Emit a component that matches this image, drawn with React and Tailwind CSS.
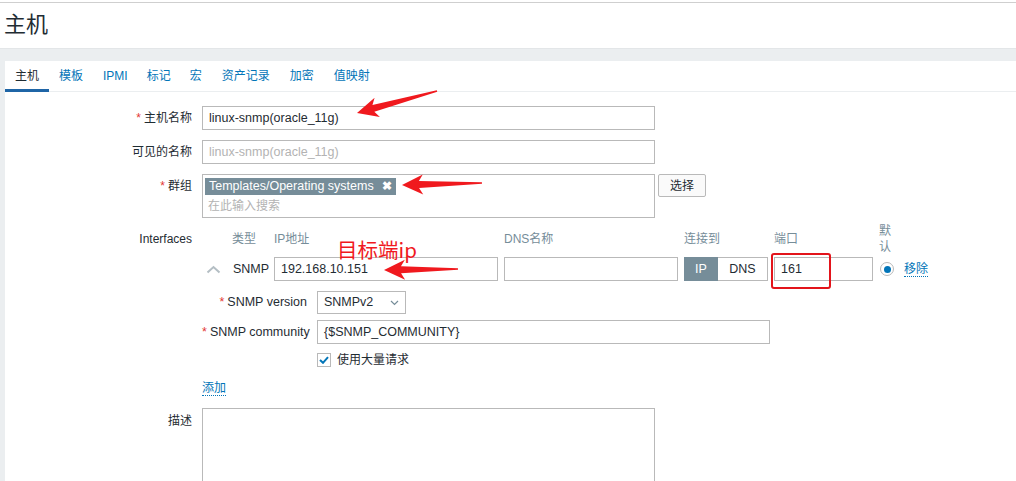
import React from 'react';

const FONT = { fontFamily: '"Liberation Sans", Arial, "Noto Sans CJK SC", sans-serif' };

const TABS = ['主机', '模板', 'IPMI', '标记', '宏', '资产记录', '加密', '值映射'];

// Red annotation arrow: tip at the origin pointing left, tail `len` px to the right
function Arrow({ x, y, len, angle }) {
  const pts = `0,0 21,-10 17,-3.5 ${len},-0.8 ${len},0.8 17,3.5 21,10`;
  return <polygon points={pts} fill="#f0191e" transform={`translate(${x} ${y}) rotate(${angle})`} />;
}

function Label({ children, required }) {
  return (
    <div className="w-[197px] shrink-0 pr-[10px] text-right leading-[24px]">
      {required && <span className="text-[#e33734] mr-[3px]">*</span>}
      {children}
    </div>
  );
}

function TextBox({ value, placeholder, className = '' }) {
  return (
    <div className={`h-[24px] border border-[#b9b9b9] bg-white px-[6px] flex items-center text-[12.5px] ${className}`}>
      {value ? <span>{value}</span> : <span className="text-[#b3b3b3]">{placeholder}</span>}
    </div>
  );
}

export default function App() {
  return (
    <div className="w-[1016px] h-[481px] overflow-hidden bg-white relative text-[12px] text-[#1f2c33]" style={FONT}>
      {/* page header */}
      <div className="mt-[2px] border-t border-[#cfcfcf] h-[46px] flex items-center pl-[4px]">
        <h1 className="text-[22px] leading-none font-normal text-[#1f2c33] -mt-[2px]">主机</h1>
      </div>

      <div className="bg-[#ebeef0] pt-[12px] pl-[5px] border-t border-[#e3e6e8]">
        <div className="bg-white h-[421px]">
          {/* tabs */}
          <div className="flex h-[31px] border-b border-[#ebeef0]">
            {TABS.map((t, i) => (
              <div
                key={t}
                className={`px-[10px] h-[31px] flex items-center ${
                  i === 0 ? 'text-[#1f2c33] border-b-[3px] border-[#1f65a6] pt-[1px]' : 'text-[#0275b8] pb-[2px]'
                } ${i === 3 || i === 4 ? '-ml-[1px]' : ''}`}
              >
                {t}
              </div>
            ))}
          </div>

          <div className="pt-[14px]">
            {/* host name */}
            <div className="flex">
              <Label required>主机名称</Label>
              <TextBox value="linux-snmp(oracle_11g)" className="w-[453px]" />
            </div>

            {/* visible name */}
            <div className="flex mt-[10px]">
              <Label>可见的名称</Label>
              <TextBox placeholder="linux-snmp(oracle_11g)" className="w-[453px]" />
            </div>

            {/* groups */}
            <div className="flex mt-[10px]">
              <Label required>群组</Label>
              <div className="w-[453px] h-[44px] border border-[#b9b9b9] p-[2px]">
                <span className="inline-flex items-center h-[17px] bg-[#768d99] text-white px-[4px] leading-none text-[12.5px]">
                  Templates/Operating systems
                  <span className="ml-[8px] text-[12px] font-bold">✖</span>
                </span>
                <div className="text-[#b3b3b3] pl-[3px] mt-[2px]">在此输入搜索</div>
              </div>
              <button className="ml-[3px] w-[48px] h-[23px] border border-[#b9b9b9] rounded-[2px] bg-[#fafafa] text-[#1f2c33]">
                选择
              </button>
            </div>

            {/* interfaces */}
            <div className="flex mt-[5px]">
              <div className="w-[197px] shrink-0 pr-[10px] h-[32px] flex items-center justify-end">Interfaces</div>
              <div>
                <div className="flex items-center h-[32px] text-[#768d99]">
                  <div className="w-[30px]" />
                  <div className="w-[42px]">类型</div>
                  <div className="w-[230px]">IP地址</div>
                  <div className="w-[180px]">DNS名称</div>
                  <div className="w-[90px]">连接到</div>
                  <div className="w-[105px]">端口</div>
                  <div className="leading-[16px]">默<br />认</div>
                </div>

                <div className="flex items-center h-[24px] mt-[2px]">
                  <div className="w-[30px] flex items-center pl-[4px]">
                    <svg width="15" height="9" viewBox="0 0 15 9">
                      <polyline points="1.5,7.5 7.5,2 13.5,7.5" fill="none" stroke="#b4bec4" strokeWidth="2" />
                    </svg>
                  </div>
                  <div className="w-[42px] pl-[1px] text-[12.5px]">SNMP</div>
                  <TextBox value="192.168.10.151" className="w-[224px]" />
                  <TextBox className="w-[174px] ml-[6px]" />
                  <div className="ml-[6px] flex h-[24px] w-[84px] text-[12.5px]">
                    <div className="w-[34px] bg-[#768d99] text-white flex items-center justify-center">IP</div>
                    <div className="flex-1 border border-l-0 border-[#b9b9b9] flex items-center justify-center">DNS</div>
                  </div>
                  <TextBox value="161" className="w-[99px] ml-[6px]" />
                  <div className="ml-[6px] w-[25px] flex items-center pl-[1px]">
                    <div className="w-[14px] h-[14px] rounded-full border border-[#b9b9b9] flex items-center justify-center">
                      <div className="w-[7px] h-[7px] rounded-full bg-[#0275b8]" />
                    </div>
                  </div>
                  <span className="text-[#0275b8] border-b border-dotted border-[#0275b8] leading-[14px]">移除</span>
                </div>

                {/* snmp details */}
                <div className="flex mt-[10px]">
                  <div className="w-[115px] pr-[10px] text-right leading-[23px] text-[12.5px]">
                    <span className="text-[#e33734] mr-[3px]">*</span>SNMP version
                  </div>
                  <div className="w-[89px] h-[23px] border border-[#b9b9b9] flex items-center justify-between px-[6px] text-[12.5px]">
                    <span>SNMPv2</span>
                    <svg width="9" height="6" viewBox="0 0 9 6">
                      <polyline points="1,1 4.5,4.5 8,1" fill="none" stroke="#768d99" strokeWidth="1.2" />
                    </svg>
                  </div>
                </div>

                <div className="flex mt-[6px]">
                  <div className="w-[115px] pr-[10px] text-right leading-[24px] whitespace-nowrap text-[12.5px]">
                    <span className="text-[#e33734] mr-[3px]">*</span>SNMP community
                  </div>
                  <TextBox value="{$SNMP_COMMUNITY}" className="w-[453px]" />
                </div>

                <div className="flex items-center mt-[7px] ml-[115px]">
                  <div className="w-[14px] h-[14px] border border-[#b9b9b9] flex items-center justify-center">
                    <svg width="10" height="8" viewBox="0 0 10 8">
                      <polyline points="1,4 4,6.8 9,1.2" fill="none" stroke="#0275b8" strokeWidth="2" />
                    </svg>
                  </div>
                  <span className="ml-[6px]">使用大量请求</span>
                </div>

                <div className="mt-[10px]">
                  <span className="text-[#0275b8] border-b border-dotted border-[#0275b8] leading-[14px] inline-block">添加</span>
                </div>
              </div>
            </div>

            {/* description */}
            <div className="flex mt-[11px]">
              <div className="w-[197px] shrink-0 pr-[10px] text-right pt-[4px]">描述</div>
              <div className="w-[453px] h-[90px] border border-[#b9b9b9]" />
            </div>
          </div>
        </div>
      </div>

      {/* red annotations */}
      <svg className="absolute inset-0 pointer-events-none" width="1016" height="481">
        <Arrow x={357} y={113} len={83} angle={-15.4} />
        <Arrow x={402} y={185} len={80} angle={-1.4} />
        <Arrow x={384} y={270} len={74} angle={-0.8} />
      </svg>
      <div className="absolute left-[771px] top-[253px] w-[60px] h-[36px] border-2 border-[#e3141b] rounded-[3px]" />
      <div
        className="absolute left-[337px] top-[236px] text-[20.5px] leading-[26px] text-[#f0191e]"
        style={{ fontFamily: '"Noto Sans CJK SC", "Liberation Sans", sans-serif' }}
      >
        目标端ip
      </div>
    </div>
  );
}
